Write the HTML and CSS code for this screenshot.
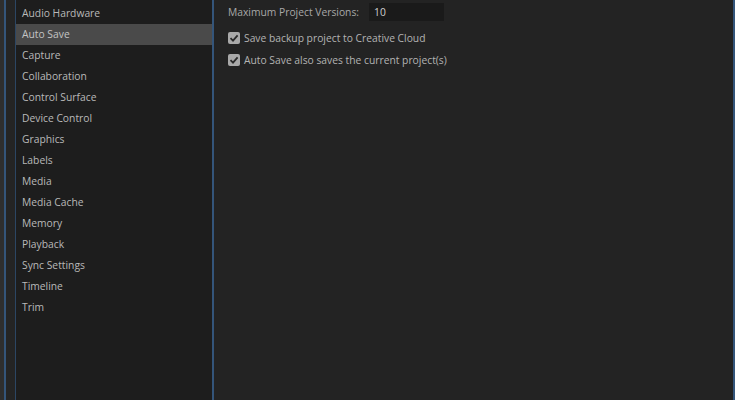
FILE: index.html
```html
<!DOCTYPE html>
<html>
<head>
    <title>Preferences - Auto Save</title>
    <link rel="stylesheet" href="styles.css">
</head>
<body>
    <div class="frame">
        <div class="dialog">
            <div class="sidebar">
                <ul class="category-list">
                    <li>Audio Hardware</li>
                    <li class="selected">Auto Save</li>
                    <li>Capture</li>
                    <li>Collaboration</li>
                    <li>Control Surface</li>
                    <li>Device Control</li>
                    <li>Graphics</li>
                    <li>Labels</li>
                    <li>Media</li>
                    <li>Media Cache</li>
                    <li>Memory</li>
                    <li>Playback</li>
                    <li>Sync Settings</li>
                    <li>Timeline</li>
                    <li>Trim</li>
                </ul>
            </div>

            <div class="content">
                <div class="field-row">
                    <label class="field-label">Maximum Project Versions:</label>
                    <input class="field-input" type="text" value="10">
                </div>

                <div class="check-row">
                    <span class="checkbox checked">
                        <svg viewBox="0 0 12 12" width="12" height="12"><path d="M2.5 6.2 L5 8.6 L9.6 3.4" fill="none" stroke="#2a2a2a" stroke-width="1.8"/></svg>
                    </span>
                    <span class="check-label">Save backup project to Creative Cloud</span>
                </div>

                <div class="check-row">
                    <span class="checkbox checked">
                        <svg viewBox="0 0 12 12" width="12" height="12"><path d="M2.5 6.2 L5 8.6 L9.6 3.4" fill="none" stroke="#2a2a2a" stroke-width="1.8"/></svg>
                    </span>
                    <span class="check-label">Auto Save also saves the current project(s)</span>
                </div>
            </div>
        </div>
    </div>
</body>
</html>
```

FILE: styles.css
```css
html, body { margin: 0; padding: 0; background: #2e2e2e; }
body { font-family: "Open Sans", "Noto Sans", sans-serif; font-size: 10.3px; color: #b9b9b9; }

.frame { height: 400px; padding-left: 4px; box-sizing: border-box; }
.dialog { display: flex; height: 100%; background: #242424; border-left: 2px solid #34557a; border-right: 2px solid #34557a; }

.sidebar { flex-shrink: 0; padding-left: 9px; }
.category-list { list-style: none; margin: 0; padding: 3px 0 0 0; width: 199px; height: 100%; box-sizing: border-box; background: #1d1d1d; border-left: 1px solid #2c4663; border-right: 2px solid #34557a; }
.category-list li { height: 21px; line-height: 21px; padding-left: 6px; white-space: nowrap; }
.category-list li.selected { background: #4a4a4a; color: #c4c4c4; }

.content { flex: 1; padding: 3px 0 0 14px; background: #232323; }
.field-row { display: flex; align-items: center; gap: 10px; height: 18px; margin-bottom: 6px; }
.field-label { color: #a8a8a8; }
.field-input { width: 75px; height: 18px; box-sizing: border-box; padding: 0 5px; border: none; outline: none; background: #1a1a1a; color: #d0d0d0; font: inherit; }

.check-row { display: flex; align-items: center; gap: 4px; height: 22px; }
.checkbox { width: 12px; height: 12px; border-radius: 2px; background: #a9a9a9; display: flex; }
.check-label { color: #b3b3b3; }
```
